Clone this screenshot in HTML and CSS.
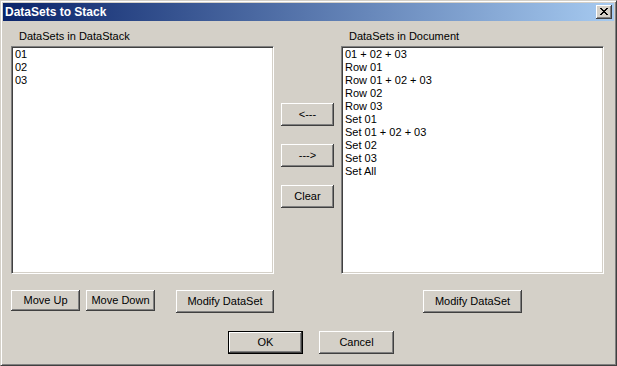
FILE: index.html
```html
<!DOCTYPE html>
<html lang="en">
<head>
  <meta charset="UTF-8" />
  <title>DataSets to Stack</title>
  <link rel="stylesheet" href="styles.css">
</head>
<body>
  <div class="window">
    <div class="caption">
      <span class="caption-title">DataSets to Stack</span>
      <button class="caption-close" aria-label="Close">
        <svg width="8" height="7" viewBox="0 0 8 7" shape-rendering="crispEdges">
          <path d="M0 0h2v1H0zM6 0h2v1H6zM1 1h2v1H1zM5 1h2v1H5zM2 2h4v1H2zM3 3h2v1H3zM2 4h4v1H2zM1 5h2v1H1zM5 5h2v1H5zM0 6h2v1H0zM6 6h2v1H6z" fill="#000"/>
        </svg>
      </button>
    </div>

    <div class="client">
      <div class="columns">
        <div class="pane">
          <div class="pane-label">DataSets in DataStack</div>
          <div class="listbox">
            <div class="list-item">01</div>
            <div class="list-item">02</div>
            <div class="list-item">03</div>
          </div>
          <div class="pane-actions">
            <button class="btn btn-small">Move Up</button>
            <button class="btn btn-small">Move Down</button>
            <button class="btn btn-modify push-right">Modify DataSet</button>
          </div>
        </div>

        <div class="side-buttons">
          <button class="btn btn-side">&lt;---</button>
          <button class="btn btn-side">---&gt;</button>
          <button class="btn btn-side">Clear</button>
        </div>

        <div class="pane">
          <div class="pane-label">DataSets in Document</div>
          <div class="listbox">
            <div class="list-item">01 + 02 + 03</div>
            <div class="list-item">Row 01</div>
            <div class="list-item">Row 01 + 02 + 03</div>
            <div class="list-item">Row 02</div>
            <div class="list-item">Row 03</div>
            <div class="list-item">Set 01</div>
            <div class="list-item">Set 01 + 02 + 03</div>
            <div class="list-item">Set 02</div>
            <div class="list-item">Set 03</div>
            <div class="list-item">Set All</div>
          </div>
          <div class="pane-actions centered">
            <button class="btn btn-modify wide">Modify DataSet</button>
          </div>
        </div>
      </div>

      <div class="footer">
        <button class="btn btn-dialog btn-default">OK</button>
        <button class="btn btn-dialog">Cancel</button>
      </div>
    </div>
  </div>
</body>
</html>
```

FILE: styles.css
```css
:root {
  --face: #d4d0c8;
  --shadow: #808080;
  --dark: #404040;
  --light: #ffffff;
  --caption-start: #0a246a;
  --caption-end: #a6caf0;
}

* {
  box-sizing: border-box;
  margin: 0;
  padding: 0;
}

body {
  font-family: "Liberation Sans", Arial, sans-serif;
  font-size: 11px;
  line-height: 13px;
  color: #000;
  background: var(--face);
}

/* Window frame */
.window {
  width: 617px;
  height: 366px;
  display: flex;
  flex-direction: column;
  background: var(--face);
  border: 1px solid;
  border-color: var(--face) var(--dark) var(--dark) var(--face);
  padding: 2px;
  box-shadow: inset 1px 1px var(--light), inset -1px -1px var(--shadow);
}

.caption {
  height: 18px;
  display: flex;
  align-items: center;
  padding: 0 2px 0 2px;
  background: linear-gradient(to right, var(--caption-start), var(--caption-end));
  color: #fff;
}

.caption-title {
  font-weight: bold;
  font-size: 12px;
}

.caption-close {
  margin-left: auto;
  width: 16px;
  height: 14px;
  display: flex;
  align-items: center;
  justify-content: center;
  border: none;
  background: var(--face);
  box-shadow: inset -1px -1px var(--dark), inset 1px 1px var(--light), inset -2px -2px var(--shadow);
  padding: 0 0 1px 0;
}

.client {
  flex: 1;
  padding: 9px 10px 0 8px;
}

.columns {
  display: flex;
  gap: 7px;
}

.pane {
  width: 263px;
  display: flex;
  flex-direction: column;
}

.pane-label {
  height: 13px;
  padding-left: 8px;
  margin-bottom: 3px;
}

/* Sunken list box */
.listbox {
  height: 228px;
  background: #fff;
  border: 1px solid;
  border-color: var(--shadow) var(--light) var(--light) var(--shadow);
  box-shadow: inset 1px 1px var(--dark), inset -1px -1px var(--face);
  padding: 1px 3px;
}

.list-item {
  height: 13px;
  white-space: nowrap;
}

.pane-actions {
  display: flex;
  align-items: flex-start;
  gap: 6px;
  margin-top: 16px;
}

.pane-actions.centered {
  justify-content: center;
}

.push-right {
  margin-left: auto;
}

.side-buttons {
  display: flex;
  flex-direction: column;
  gap: 18px;
  padding-top: 73px;
}

/* Buttons */
.btn {
  font-family: inherit;
  font-size: 11px;
  line-height: 13px;
  color: #000;
  background: var(--face);
  border: none;
  display: flex;
  align-items: center;
  justify-content: center;
  box-shadow: inset -1px -1px var(--dark), inset 1px 1px var(--light), inset -2px -2px var(--shadow);
}

.btn-small {
  width: 69px;
  height: 21px;
}

.btn-modify {
  width: 98px;
  height: 23px;
}

.btn-modify.wide {
  width: 99px;
}

.btn-side {
  width: 53px;
  height: 23px;
}

.footer {
  display: flex;
  justify-content: center;
  gap: 16px;
  margin-top: 18px;
  padding-left: 7px;
}

.btn-dialog {
  width: 75px;
  height: 23px;
}

.btn-default {
  border: 1px solid #000;
}
```
